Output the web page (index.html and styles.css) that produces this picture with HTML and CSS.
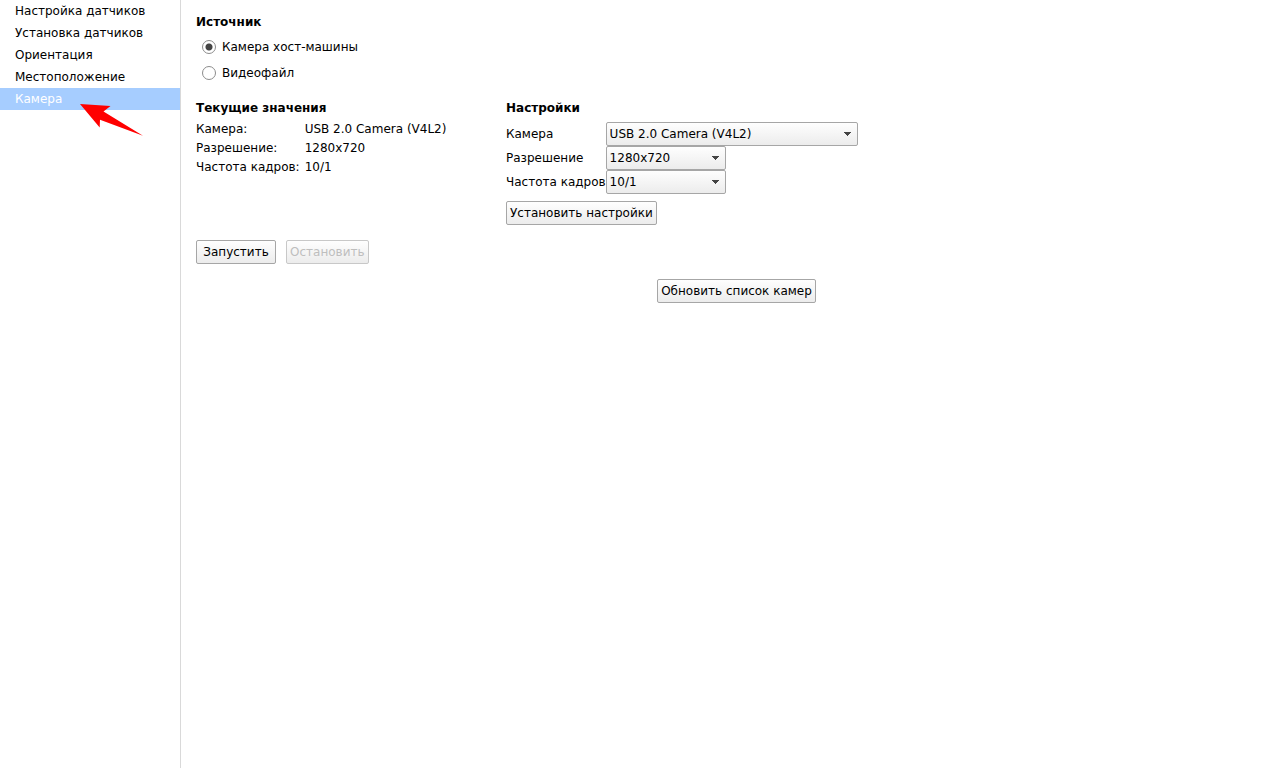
FILE: index.html
```html
<!DOCTYPE html>
<html lang="ru">
<head>
<meta charset="utf-8">
<title>Камера</title>
<link rel="stylesheet" href="styles.css">
</head>
<body>
<div class="app">
  <nav class="sidebar">
    <a class="nav-item" href="#sensors">Настройка датчиков</a>
    <a class="nav-item" href="#install">Установка датчиков</a>
    <a class="nav-item" href="#orientation">Ориентация</a>
    <a class="nav-item" href="#location">Местоположение</a>
    <a class="nav-item active" href="#camera" aria-current="page">Камера</a>
    <svg class="pointer" viewBox="0 0 64 33" aria-hidden="true"><path d="M0 0 L30.5 2 L23.5 7.5 L63 31.8 L20 15.8 L19.7 23.5 Z" fill="#ff0000"/></svg>
  </nav>
  <main class="content">
    <section>
      <h2 class="heading">Источник</h2>
      <div class="sources">
        <label class="source"><input class="radio" type="radio" name="source" checked>Камера хост-машины</label>
        <label class="source"><input class="radio" type="radio" name="source">Видеофайл</label>
      </div>
    </section>
    <div class="columns">
      <section>
        <h2 class="heading">Текущие значения</h2>
        <dl class="values">
          <dt>Камера:</dt><dd>USB 2.0 Camera (V4L2)</dd>
          <dt>Разрешение:</dt><dd>1280x720</dd>
          <dt>Частота кадров:</dt><dd>10/1</dd>
        </dl>
      </section>
      <section>
        <h2 class="heading">Настройки</h2>
        <div class="settings">
          <label for="camera">Камера</label>
          <select class="control select wide" id="camera"><option>USB 2.0 Camera (V4L2)</option></select>
          <label for="resolution">Разрешение</label>
          <select class="control select" id="resolution"><option>1280x720</option></select>
          <label for="rate">Частота кадров</label>
          <select class="control select" id="rate"><option>10/1</option></select>
        </div>
        <button class="control" type="button">Установить настройки</button>
      </section>
    </div>
    <div class="actions">
      <button class="control start" type="button">Запустить</button>
      <button class="control" type="button" disabled>Остановить</button>
    </div>
    <div class="refresh">
      <button class="control" type="button">Обновить список камер</button>
    </div>
  </main>
</div>
</body>
</html>
```
FILE: styles.css
```css
* {
  box-sizing: border-box;
}

body {
  margin: 0;
  background: #fff;
  color: #000;
  font: 12px/16px "DejaVu Sans", sans-serif;
}

.app {
  display: flex;
  min-height: 100vh;
}

.sidebar {
  position: relative;
  flex: none;
  width: 181px;
  border-right: 1px solid #d9d9d9;
}

.nav-item {
  display: block;
  padding: 0 15px;
  line-height: 22px;
  color: #000;
  text-decoration: none;
}

.nav-item.active {
  background: #a6cdff;
  color: #fff;
}

.pointer {
  position: absolute;
  left: 80px;
  top: 104px;
  width: 64px;
  height: 33px;
}

.content {
  flex: 1;
  display: flex;
  flex-direction: column;
  gap: 15px;
  padding: 14px 7px 14px 15px;
}

.heading {
  margin: 0;
  font-size: 12px;
  font-weight: bold;
  line-height: 16px;
}

.sources {
  padding: 4px 6px 0;
}

.source {
  display: flex;
  align-items: center;
  gap: 6px;
  height: 26px;
}

.radio {
  appearance: none;
  width: 14px;
  height: 14px;
  margin: 0;
  border: 1px solid #8c8c8c;
  border-radius: 50%;
  background: #fff;
}

.radio:checked {
  background: radial-gradient(circle, #444 3px, #fff 4px);
}

.columns {
  display: grid;
  grid-template-columns: 310px 1fr;
  margin-top: -1px;
}

.values {
  display: grid;
  grid-template-columns: max-content 1fr;
  column-gap: 5px;
  margin: 4px 0 0;
  line-height: 19px;
}

.values dd {
  margin: 0;
}

.settings {
  display: grid;
  grid-template-columns: max-content 1fr;
  align-items: center;
  justify-items: start;
  margin: 6px 0 7px;
  white-space: nowrap;
}

.control {
  height: 24px;
  padding: 0 3px;
  border: 1px solid #a6a6a6;
  border-radius: 2px;
  background: linear-gradient(#fefefe, #ececec);
  color: #000;
  font: inherit;
}

.control:disabled {
  border-color: #c8c8c8;
  color: #bebebe;
}

.select {
  appearance: none;
  width: 120px;
  background:
    linear-gradient(to bottom right, #444 50%, transparent 50%) right 5px center / 4px 4px no-repeat,
    linear-gradient(to bottom left, #444 50%, transparent 50%) right 9px center / 4px 4px no-repeat,
    linear-gradient(#fefefe, #ececec);
}

.wide {
  width: 252px;
}

.actions {
  display: flex;
  gap: 10px;
}

.start {
  width: 80px;
}

.refresh {
  display: flex;
  justify-content: center;
}
```
